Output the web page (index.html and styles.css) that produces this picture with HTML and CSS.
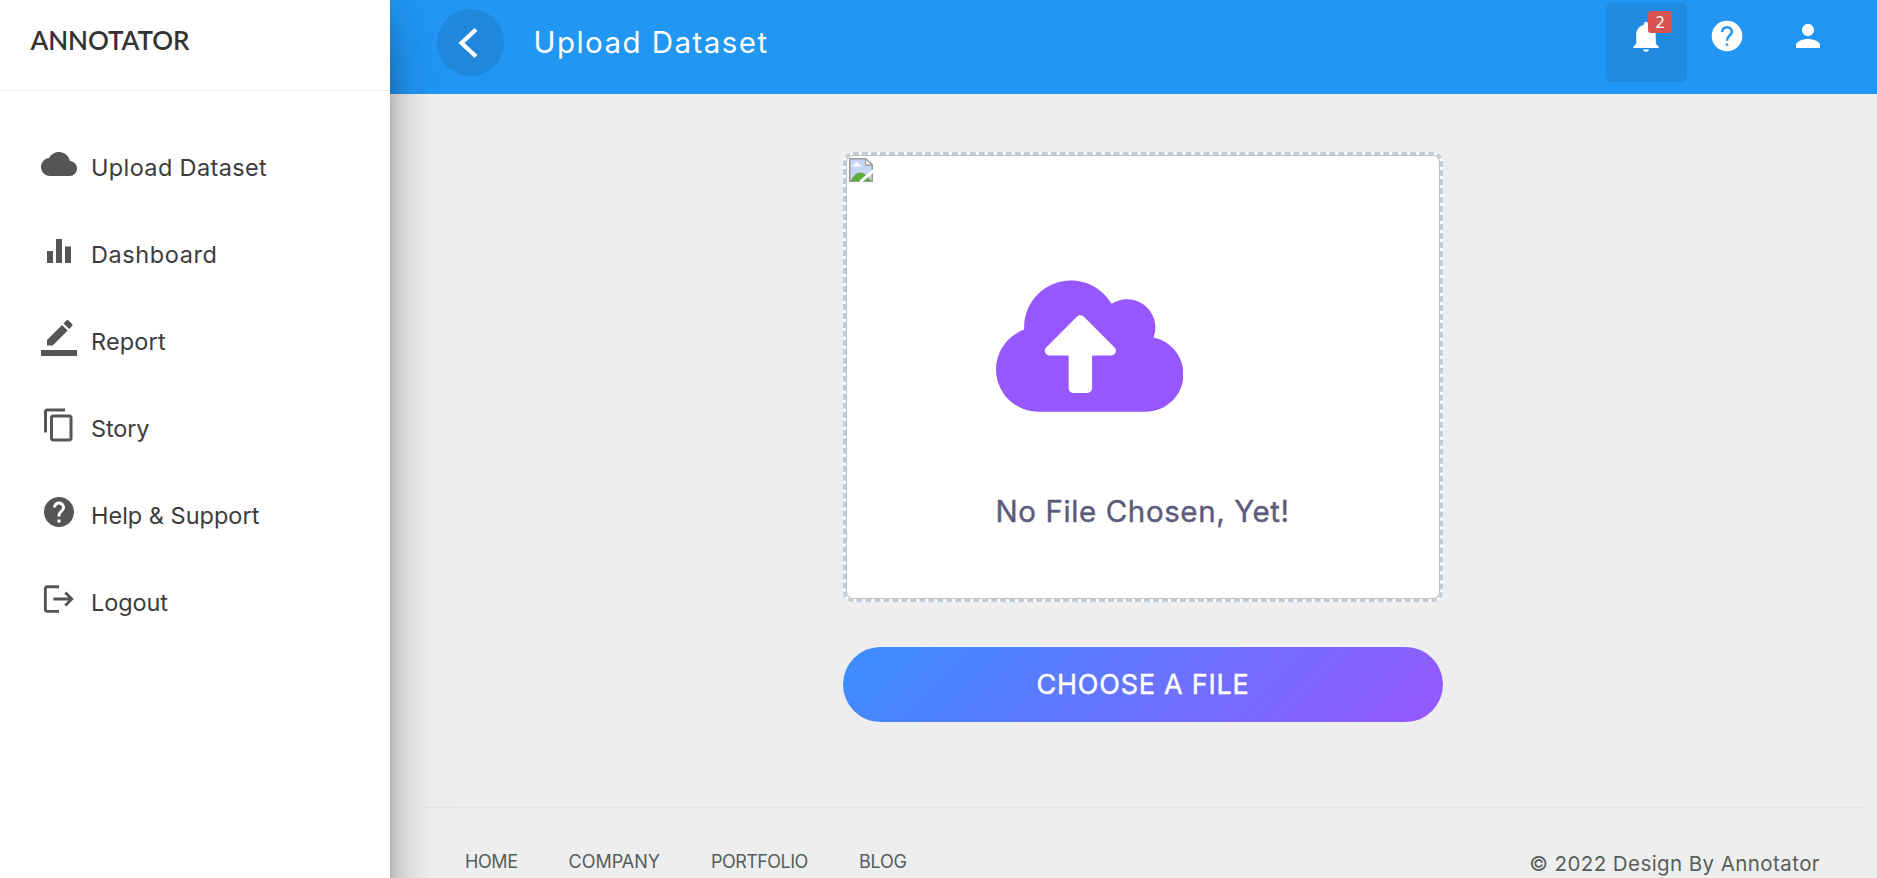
FILE: index.html
```html
<!DOCTYPE html>
<html lang="en">
<head>
<meta charset="utf-8">
<title>Upload Dataset</title>
<link rel="stylesheet" href="styles.css">
</head>
<body>
<div class="app">
  <aside class="sidebar">
    <div class="brand">ANNOTATOR</div>
    <nav class="menu">
      <a class="item upload"><svg class="icon" viewBox="0 0 24 24"><path d="M19.35 10.04C18.67 6.59 15.64 4 12 4 9.11 4 6.6 5.64 5.35 8.04 2.34 8.36 0 10.91 0 14c0 3.31 2.69 6 6 6h13c2.76 0 5-2.24 5-5 0-2.64-2.05-4.78-4.65-4.96z"/></svg><span>Upload Dataset</span></a>
      <a class="item dashboard"><svg class="icon" viewBox="0 0 24 24"><path d="M10 20h4V4h-4v16zm-6 0h4v-8H4v8zM16 9v11h4V9h-4z"/></svg><span>Dashboard</span></a>
      <a class="item report"><svg class="icon" viewBox="0 0 24 24"><path d="M17.75 7L14 3.25l-10 10V17h3.75l10-10zm2.96-2.96c.39-.39.39-1.02 0-1.41L18.37.29c-.39-.39-1.02-.39-1.41 0L15 2.25 18.75 6l1.96-1.96z"/><path d="M0 20h24v4H0z"/></svg><span>Report</span></a>
      <a class="item story"><svg class="icon" viewBox="0 0 24 24"><path d="M16 1H4c-1.1 0-2 .9-2 2v14h2V3h12V1zm3 4H8c-1.1 0-2 .9-2 2v14c0 1.1.9 2 2 2h11c1.1 0 2-.9 2-2V7c0-1.1-.9-2-2-2zm0 16H8V7h11v14z"/></svg><span>Story</span></a>
      <a class="item help"><svg class="icon" viewBox="0 0 24 24"><path d="M12 2C6.48 2 2 6.48 2 12s4.48 10 10 10 10-4.48 10-10S17.52 2 12 2zm1 17h-2v-2h2v2zm2.07-7.75l-.9.92C13.45 12.9 13 13.5 13 15h-2v-.5c0-1.1.45-2.1 1.17-2.83l1.24-1.26c.37-.36.59-.86.59-1.41 0-1.1-.9-2-2-2s-2 .9-2 2H8c0-2.21 1.79-4 4-4s4 1.79 4 4c0 .88-.36 1.68-.93 2.25z"/></svg><span>Help &amp; Support</span></a>
      <a class="item logout"><svg class="icon stroked" viewBox="0 0 24 24"><path d="M12 3.8H4.3Q2.9 3.8 2.9 5.2V18.8Q2.9 20.2 4.3 20.2H12M8.3 12H20.8M16.2 7.7L20.5 12L16.2 16.3"/></svg><span>Logout</span></a>
    </nav>
  </aside>
  <div class="page">
    <header class="topbar">
      <button class="back"><svg viewBox="0 0 24 36"><path d="M20 4.5L5.5 18L20 31.5"/></svg></button>
      <h1 class="title">Upload Dataset</h1>
      <div class="actions">
        <a class="action active"><svg class="icon" viewBox="0 0 24 24"><path d="M11.5 22.5c1.1 0 1.9-.6 2-1.5h-4c.1.9.9 1.5 2 1.5zM18 16.5V11c0-3.07-1.85-5.64-5-6.32V4c0-.83-.67-1.5-1.5-1.5S10 3.17 10 4v.68C6.86 5.36 5 7.92 5 11v5.5c0 1.3-1.5 1.7-2 2.8V20h17v-.7c-.5-1.1-2-1.5-2-2.8z" transform="translate(.5)"/></svg><span class="badge">2</span></a>
        <a class="action"><svg class="icon" viewBox="0 0 24 24"><circle cx="12" cy="12" r="10.2"/><path class="mark" d="M8.8 9.3C8.8 7.4 10.2 6.2 12 6.2s3.2 1.2 3.2 2.9C15.2 11.5 12 11.6 12 15.2"/><path class="mark" d="M12 17v1.5"/></svg></a>
        <a class="action"><svg class="icon" viewBox="0 0 24 24"><path d="M12 12c2.21 0 4-1.79 4-4s-1.79-4-4-4-4 1.79-4 4 1.79 4 4 4zm0 2c-2.67 0-8 1.34-8 4v2h16v-2c0-2.66-5.33-4-8-4z"/></svg></a>
      </div>
    </header>
    <main class="content">
      <section class="dropzone">
        <svg class="missing" viewBox="0 0 16 16"><path d="M.5.5h10.5l4.5 4.2v10.8H.5z" fill="#c6d6f6" stroke="#999"/><path d="M11 .5v4.2h4.5z" fill="#fff" stroke="#999" stroke-width=".8"/><path d="M2.2 5.6q0-1.3 1.3-1.3q.5-1.5 1.7-1.5t1.6 1.5q1.2 0 1.2 1.3z" fill="#fff"/><path d="M1 15.4Q4 9.6 7.5 9.6T14.8 15.4z" fill="#5aac3b"/><path d="M16.5 8.3L7.5 16" stroke="#fff" stroke-width="2"/></svg>
        <div class="preview">
          <svg class="cloud" viewBox="0 0 640 512"><path d="M537.6 226.6c4.1-10.7 6.4-22.4 6.4-34.6 0-53-43-96-96-96-19.7 0-38.1 6-53.3 16.2C367 64.2 315.3 32 256 32c-88.4 0-160 71.6-160 160 0 2.7.1 5.4.2 8.1C40.2 219.8 0 273.2 0 336c0 79.5 64.5 144 144 144h368c70.7 0 128-57.3 128-128 0-61.9-44-113.6-102.4-125.4zM393.4 288H328v112c0 8.8-7.2 16-16 16h-48c-8.8 0-16-7.2-16-16V288h-65.4c-14.3 0-21.4-17.2-11.3-27.3l105.4-105.4c6.2-6.2 16.4-6.2 22.6 0l105.4 105.4c10.1 10.1 2.9 27.3-11.3 27.3z"/></svg>
          <p class="empty">No File Chosen, Yet!</p>
        </div>
      </section>
      <button class="choose">CHOOSE A FILE</button>
    </main>
    <footer class="footer">
      <nav class="links"><a class="home">HOME</a><a class="company">COMPANY</a><a class="portfolio">PORTFOLIO</a><a class="blog">BLOG</a></nav>
      <div class="copyright">© 2022 Design By Annotator</div>
    </footer>
  </div>
</div>
</body>
</html>
```
FILE: styles.css
```css
* { box-sizing: border-box; }
body { margin: 0; background: #eee; font-family: Inter, "Open Sans", sans-serif; overflow: hidden; }
a { color: inherit; text-decoration: none; }
button { border: 0; padding: 0; font: inherit; }
.app { display: flex; height: 878px; overflow: hidden; }

.sidebar { width: 390px; height: 940px; flex: none; background: #fff; position: relative; z-index: 2;
  box-shadow: 0 24px 57px -18px rgba(0,0,0,.56), 0 6px 37.5px 0 rgba(0,0,0,.12), 0 12px 15px -7.5px rgba(0,0,0,.2); }
.brand { height: 91px; padding: 0 0 11px 30.5px; border-bottom: 1px solid #eee; display: flex; align-items: center;
  font: 600 26px Lato, sans-serif; color: #333; letter-spacing: -.1px; }
.menu { display: flex; flex-direction: column; padding-top: 32px; }
.item { display: flex; align-items: center; gap: 14.5px; height: 87px; padding-left: 40.5px; font-size: 23.5px; color: #3c3c3c; }
.item span { margin-top: 1px; }
.icon { width: 36px; height: 36px; flex: none; fill: currentColor; }
.item .icon { margin-bottom: 6px; color: #555; }
.item .stroked { fill: none; stroke: currentColor; stroke-width: 1.9; }
.upload { letter-spacing: .36px; }
.dashboard { letter-spacing: .6px; }
.report { letter-spacing: .15px; }
.story { letter-spacing: -.15px; }
.help { letter-spacing: 0; }
.logout { letter-spacing: -.1px; }

.page { flex: 1; min-width: 0; display: flex; flex-direction: column; }
.topbar { height: 94px; flex: none; background: #2196f3; color: #fff; display: flex; align-items: flex-start; padding: 3px 28px 0 47px; }
.back { width: 67px; height: 67px; margin-top: 6px; border-radius: 50%; background: #1f88dd; display: flex; align-items: center; justify-content: center; }
.back svg { width: 24px; height: 36px; fill: none; stroke: #fff; stroke-width: 4.2; margin-right: 6px; }
.title { margin: 18px 0 0 29.5px; font-size: 29.5px; line-height: 43px; font-weight: 400; letter-spacing: 1.45px; }
.actions { margin-left: auto; display: flex; }
.action { width: 81px; height: 79px; padding: 15px 1px 0 0; display: flex; justify-content: center; border-radius: 6px; position: relative; }
.active { background: #1f8ae0; }
.mark { fill: none; stroke: #2196f3; stroke-width: 1.7; }
.badge { position: absolute; left: 42px; top: 8px; width: 24px; height: 22px; border-radius: 3px; background: #d9534f;
  font: 16px/22px "Noto Sans", sans-serif; text-align: center; }

.content { width: 600px; margin: 58px 0 0 453px; flex: none; }
.dropzone { height: 450px; background: #fff; border: 3px dashed #c2cdda; border-radius: 10px; box-shadow: inset 0 0 0 1px #c0c0c0; position: relative; padding: 103px 0 0 149.5px; }
.missing { position: absolute; left: 3px; top: 3px; width: 24px; height: 24px; }
.preview { display: flex; flex-direction: column; align-items: flex-start; }
.cloud { width: 187.5px; height: 150px; margin-top: 12.5px; fill: #9658fe; }
.empty { margin: 69.5px 0 0 0; font-size: 29.5px; line-height: 43px; color: #5b5b7b; letter-spacing: .6px; -webkit-text-stroke: .4px #5b5b7b; }
.choose { display: block; width: 600px; height: 75px; margin-top: 45px; border-radius: 38px; color: #fff;
  background: linear-gradient(135deg, #3a8ffe 0%, #9658fe 100%); font-size: 27px; letter-spacing: .75px; -webkit-text-stroke: .4px #fff; }

.footer { flex: none; margin: 85px 12px 0 30px; height: 110px; border-top: 1px solid #e4e4e4; display: flex; justify-content: space-between; padding: 42px 45px 0 45px; color: #555f5c; }
.links { display: flex; font-size: 18px; line-height: 24px; }
.home { width: 103.5px; letter-spacing: -.4px; }
.company { width: 142.5px; }
.portfolio { width: 148px; letter-spacing: -.55px; }
.blog { letter-spacing: -.2px; }
.copyright { font-size: 20.5px; line-height: 27px; letter-spacing: .42px; }
```
